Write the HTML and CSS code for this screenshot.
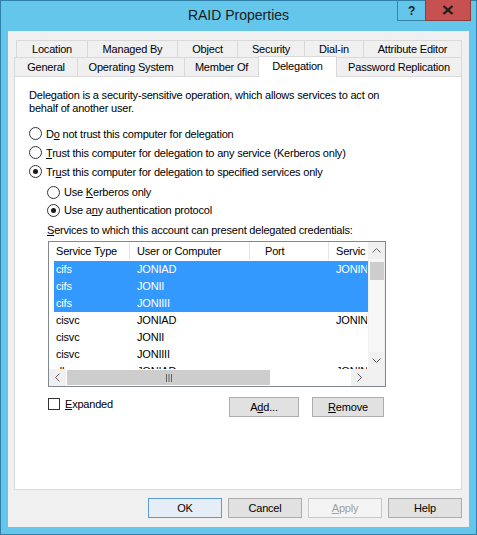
FILE: index.html
```html
<!DOCTYPE html>
<html>
<head>
<meta charset="utf-8">
<title>RAID Properties</title>
<link rel="stylesheet" href="styles.css">
</head>
<body>
<div class="window">
  <div class="titlebar">
    <div class="tb-spacer"></div>
    <div class="title">RAID Properties</div>
    <div class="caption">
      <div class="cbtn help">?</div>
      <div class="cbtn close">
        <svg width="12" height="10" viewBox="0 0 12 10"><path d="M1.5 1 L10.5 9 M10.5 1 L1.5 9" stroke="#1b1b1b" stroke-width="2.2" fill="none"/></svg>
      </div>
    </div>
  </div>
  <div class="client">
    <div class="tabs">
      <div class="tabrow row1">
        <div class="tab t-location">Location</div>
        <div class="tab t-managed">Managed By</div>
        <div class="tab t-object">Object</div>
        <div class="tab t-security">Security</div>
        <div class="tab t-dialin">Dial-in</div>
        <div class="tab t-attr">Attribute Editor</div>
      </div>
      <div class="tabrow row2">
        <div class="tab t-general">General</div>
        <div class="tab t-os">Operating System</div>
        <div class="tab t-member">Member Of</div>
        <div class="tab t-deleg selected">Delegation</div>
        <div class="tab t-pwd">Password Replication</div>
      </div>
    </div>
    <div class="panel">
      <p class="intro">Delegation is a security-sensitive operation, which allows services to act on<br>behalf of another user.</p>
      <div class="opts">
        <div class="radio"><span class="rb"></span><span>D<u>o</u> not trust this computer for delegation</span></div>
        <div class="radio"><span class="rb"></span><span><u>T</u>rust this computer for delegation to any service (Kerberos only)</span></div>
        <div class="radio"><span class="rb on"></span><span>Tr<u>u</u>st this computer for delegation to specified services only</span></div>
        <div class="sub">
          <div class="radio small first"><span class="rb"></span><span>Use <u>K</u>erberos only</span></div>
          <div class="radio small"><span class="rb on"></span><span>Use a<u>n</u>y authentication protocol</span></div>
          <div class="svc-label"><u>S</u>ervices to which this account can present delegated credentials:</div>
          <div class="listview">
            <div class="lv-main">
              <div class="lv-head">
                <div class="hc c1">Service Type</div>
                <div class="hc c2">User or Computer</div>
                <div class="hc c3"><span class="port">Port</span></div>
                <div class="hc c4">Servic</div>
              </div>
              <div class="lv-rows">
                <div class="row sel"><span class="c1">cifs</span><span class="c2">JONIAD</span><span class="c3"></span><span class="c4">JONIN</span></div>
                <div class="row sel"><span class="c1">cifs</span><span class="c2">JONII</span><span class="c3"></span><span class="c4"></span></div>
                <div class="row sel"><span class="c1">cifs</span><span class="c2">JONIIII</span><span class="c3"></span><span class="c4"></span></div>
                <div class="row"><span class="c1">cisvc</span><span class="c2">JONIAD</span><span class="c3"></span><span class="c4">JONIN</span></div>
                <div class="row"><span class="c1">cisvc</span><span class="c2">JONII</span><span class="c3"></span><span class="c4"></span></div>
                <div class="row"><span class="c1">cisvc</span><span class="c2">JONIIII</span><span class="c3"></span><span class="c4"></span></div>
                <div class="row"><span class="c1">dhcp</span><span class="c2">JONIAD</span><span class="c3"></span><span class="c4">JONIN</span></div>
              </div>
            </div>
            <div class="vscroll">
              <div class="sb-btn"><svg width="17" height="17" viewBox="0 0 17 17"><path d="M4.5 10.5 L8.5 6.5 L12.5 10.5" stroke="#606060" fill="none"/></svg></div>
              <div class="v-track"><div class="v-thumb"></div></div>
              <div class="sb-btn"><svg width="17" height="17" viewBox="0 0 17 17"><path d="M4.5 6.5 L8.5 10.5 L12.5 6.5" stroke="#606060" fill="none"/></svg></div>
            </div>
            <div class="hscroll">
              <div class="sb-btn"><svg width="17" height="17" viewBox="0 0 17 17"><path d="M10.5 4.5 L6.5 8.5 L10.5 12.5" stroke="#606060" fill="none"/></svg></div>
              <div class="h-track">
                <div class="h-thumb"><svg width="8" height="8" viewBox="0 0 8 8"><path d="M1.5 0 V8 M4 0 V8 M6.5 0 V8" stroke="#606060" fill="none"/></svg></div>
              </div>
              <div class="sb-btn"><svg width="17" height="17" viewBox="0 0 17 17"><path d="M6.5 4.5 L10.5 8.5 L6.5 12.5" stroke="#606060" fill="none"/></svg></div>
            </div>
            <div class="corner"></div>
          </div>
          <div class="list-actions">
            <div class="check"><span class="cb"></span><span><u>E</u>xpanded</span></div>
            <div class="btn add">A<u>d</u>d...</div>
            <div class="btn remove"><u>R</u>emove</div>
          </div>
        </div>
      </div>
    </div>
    <div class="buttons">
      <div class="btn default">OK</div>
      <div class="btn">Cancel</div>
      <div class="btn disabled"><u>A</u>pply</div>
      <div class="btn">Help</div>
    </div>
  </div>
</div>
</body>
</html>
```

FILE: styles.css
```css
* { box-sizing: border-box; }
html, body { margin: 0; padding: 0; }
body {
  font-family: "Liberation Sans", Arial, sans-serif;
  font-size: 11px;
  letter-spacing: -0.2px;
  color: #000;
  background: #63c6ea;
}
u { text-decoration: underline; text-underline-offset: 1px; }

.window {
  width: 477px;
  height: 535px;
  border: 1px solid #2f7fa6;
  background: #63c6ea;
  padding: 0 7px 7px 7px;
  display: flex;
  flex-direction: column;
}

.titlebar {
  height: 30px;
  flex: none;
  display: grid;
  grid-template-columns: 1fr auto 1fr;
}
.title {
  align-self: center;
  font-size: 14px;
  letter-spacing: 0;
  color: #1b1b1b;
  margin-top: -2px;
}
.caption {
  justify-self: end;
  align-self: start;
  display: flex;
  margin-top: -1px;
  margin-right: -2px;
}
.cbtn {
  height: 21px;
  display: flex;
  align-items: center;
  justify-content: center;
}
.cbtn.help {
  width: 28px;
  border: 1px solid #3c84a7;
  border-top: none;
  border-right: none;
  font-weight: bold;
  font-size: 12px;
  color: #1b1b1b;
  padding-top: 1px;
}
.cbtn.close {
  width: 46px;
  background: #c75050;
  border: 1px solid #8f3b3b;
  border-top: none;
}

.client {
  flex: 1;
  background: #f0f0f0;
  padding: 9px 7px 0 6px;
  display: flex;
  flex-direction: column;
}

.tabs { display: flex; flex-direction: column; }
.tabrow { display: flex; }
.row1 { height: 17px; margin-left: 2px; }
.row2 { height: 19px; }
.tab {
  border: 1px solid #d9d9d9;
  border-bottom: none;
  background: #f0f0f0;
  margin-left: -1px;
  text-align: center;
  color: #000;
}
.tab:first-child { margin-left: 0; }
.row1 .tab { line-height: 16px; }
.row2 .tab { line-height: 19px; }
.t-location { width: 72px; }
.t-managed { width: 91px; }
.t-object { width: 61px; }
.t-security { width: 68px; }
.t-dialin { width: 60px; }
.t-attr { width: 99px; }
.t-general { width: 64px; }
.t-os { width: 108px; }
.t-member { width: 75px; }
.t-deleg { width: 79px; }
.t-pwd { width: 126px; }
.tab.selected {
  background: #fff;
  height: 21px;
  margin-top: -1px;
  line-height: 18px;
  position: relative;
  z-index: 2;
}

.panel {
  width: 448px;
  height: 414px;
  background: #fff;
  border: 1px solid #d9d9d9;
  padding: 0 0 0 14px;
  flex: none;
}
.intro {
  margin: 12px 0 0 0;
  line-height: 13px;
}
.opts { margin-top: 9px; }
.radio {
  display: flex;
  align-items: center;
  height: 19px;
}
.radio .rb {
  width: 13px;
  height: 13px;
  border: 1px solid #333;
  border-radius: 50%;
  background: #fff;
  margin-right: 4px;
  display: flex;
  align-items: center;
  justify-content: center;
  flex: none;
}
.radio .rb.on::after {
  content: "";
  width: 5px;
  height: 5px;
  border-radius: 50%;
  background: #1a1a1a;
}
.sub { margin-left: 18px; }
.radio.small { height: 18px; }
.radio.small.first { margin-top: 2px; }
.svc-label {
  margin-top: 5px;
  line-height: 13px;
}

.listview {
  margin-top: 4px;
  margin-left: 1px;
  width: 338px;
  height: 146px;
  border: 1px solid #828790;
  display: grid;
  grid-template-columns: 319px 17px;
  grid-template-rows: 127px 17px;
  background: #fff;
}
.lv-main { overflow: hidden; }
.lv-head {
  height: 19px;
  display: grid;
  grid-template-columns: 81px 120px 79px 39px;
  border-bottom: 1px solid #fff;
}
.hc {
  border-right: 1px solid #e5e5e5;
  line-height: 19px;
  padding-left: 7px;
  white-space: nowrap;
  overflow: hidden;
}
.hc .port { padding-left: 8px; }
.hc.c4 { border-right: none; }
.row {
  height: 17px;
  line-height: 17px;
  display: grid;
  grid-template-columns: 81px 120px 79px 33px;
  margin-left: 5px;
  white-space: nowrap;
}
.row span { overflow: hidden; padding-left: 2px; }
.row.sel { background: #3399ff; color: #fff; }

.vscroll {
  display: flex;
  flex-direction: column;
  background: #f0f0f0;
}
.sb-btn { width: 17px; height: 17px; flex: none; background: #f0f0f0; }
.v-track {
  flex: 1;
  padding: 3px 1px 0 1px;
  background: #f7f7f7;
  border-left: 1px solid #f0f0f0;
  border-right: 1px solid #f0f0f0;
}
.v-thumb { width: 14px; height: 18px; background: #cdcdcd; }
.hscroll {
  display: flex;
  background: #f0f0f0;
}
.h-track { flex: 1; background: #fff; display: flex; padding: 1px 0; }
.h-thumb {
  width: 203px;
  background: #cdcdcd;
  display: flex;
  align-items: center;
  justify-content: center;
  margin-left: 1px;
}
.corner { background: #f0f0f0; }

.list-actions {
  display: flex;
  align-items: flex-start;
  margin-top: 10px;
  margin-left: 1px;
}
.check { display: flex; align-items: center; height: 13px; width: 181px; }
.cb {
  width: 12px;
  height: 12px;
  border: 1px solid #333;
  background: #fff;
  margin-right: 5px;
}
.btn {
  height: 20px;
  width: 74px;
  background: #e1e1e1;
  border: 1px solid #adadad;
  display: flex;
  align-items: center;
  justify-content: center;
}
.btn.add { width: 70px; }
.btn.remove { width: 72px; margin-left: 13px; }

.buttons {
  display: flex;
  justify-content: flex-end;
  gap: 6px;
  margin-top: 8px;
}
.btn.default { background: #e5eef7; border-color: #5b9bd5; }
.btn.disabled { color: #a0a0a0; border-color: #c8c8c8; background: #f4f4f4; }
```
